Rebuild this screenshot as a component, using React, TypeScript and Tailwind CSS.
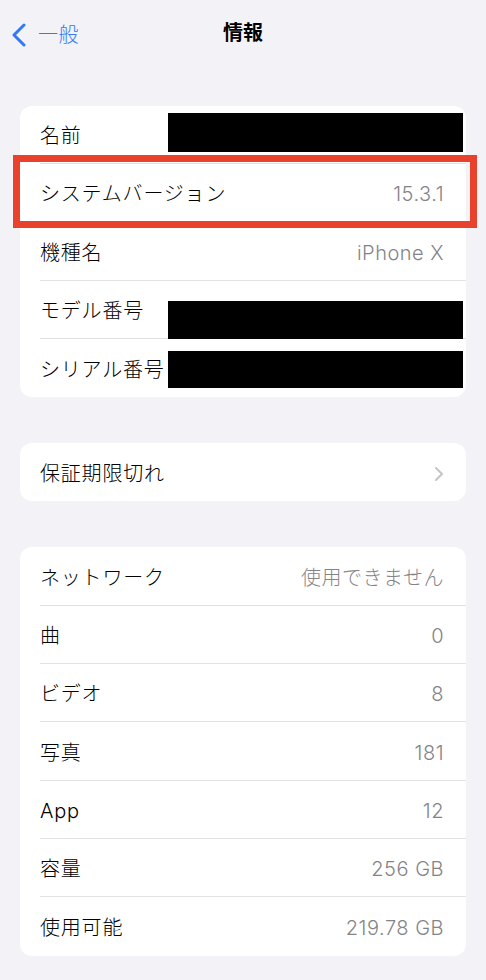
const font = { fontFamily: '"Inter", "Noto Sans CJK JP", sans-serif' };

type Box = { top: number; bottom: number };
type Row = { label: string; value?: string; box?: Box; highlight?: boolean };

const deviceRows: Row[] = [
  { label: "名前", box: { top: 7, bottom: 12 } },
  { label: "システムバージョン", value: "15.3.1", highlight: true },
  { label: "機種名", value: "iPhone X" },
  { label: "モデル番号", box: { top: 20, bottom: 0 } },
  { label: "シリアル番号", box: { top: 12, bottom: 9 } },
];

const statRows: Row[] = [
  { label: "ネットワーク", value: "使用できません" },
  { label: "曲", value: "0" },
  { label: "ビデオ", value: "8" },
  { label: "写真", value: "181" },
  { label: "App", value: "12" },
  { label: "容量", value: "256 GB" },
  { label: "使用可能", value: "219.78 GB" },
];

function InfoRow({ row, last }: { row: Row; last: boolean }) {
  return (
    <div className="relative h-[58.3px] pl-5">
      <div
        className={`flex h-full items-center justify-between pr-[22px] pt-[3px] ${
          last ? "" : "border-b border-[#e2e2e5]"
        }`}
      >
        <span className="text-[20px] font-light tracking-[0.8px] text-black whitespace-nowrap">{row.label}</span>
        {row.value && (
          <span className="text-[20px] font-light tracking-[0.5px] text-[#848488]">{row.value}</span>
        )}
      </div>
      {row.box && (
        <div
          className="absolute left-[148px] right-[3px] bg-black"
          style={{ top: row.box.top, bottom: row.box.bottom }}
        />
      )}
      {row.highlight && (
        <div className="absolute -left-[7px] -right-[11px] -top-[9px] -bottom-[5px] border-[7px] border-[#e8412c]" />
      )}
    </div>
  );
}

function Card({ rows }: { rows: Row[] }) {
  return (
    <div className="mx-5 rounded-[12px] bg-white">
      {rows.map((r, i) => (
        <InfoRow key={r.label} row={r} last={i === rows.length - 1} />
      ))}
    </div>
  );
}

export default function App() {
  return (
    <div className="min-h-[980px] w-[486px] bg-[#f2f2f7]" style={font}>
      {/* Nav bar */}
      <div className="relative flex h-[66px] items-center justify-center">
        <div className="absolute left-[10px] top-[20px] flex items-center gap-[10px]">
          <svg width="18" height="24" viewBox="0 0 18 24" fill="none" aria-hidden="true">
            <path d="M14 2L4 12L14 22" stroke="#3478f6" strokeWidth="3" strokeLinecap="round" strokeLinejoin="round" />
          </svg>
          <span className="text-[20px] font-light tracking-[0.5px] text-[#3478f6]">一般</span>
        </div>
        <span className="text-[20px] font-bold text-black">情報</span>
      </div>

      <div className="pt-[40px]">
        <Card rows={deviceRows} />
      </div>

      <div className="mx-5 mt-[46px] flex h-[58px] items-center justify-between rounded-[12px] bg-white pl-5 pr-[22px] pt-[3px]">
        <span className="text-[20px] font-light tracking-[0.8px] text-black">保証期限切れ</span>
        <svg width="10" height="16" viewBox="0 0 10 16" fill="none" aria-hidden="true">
          <path d="M2 2L8 8L2 14" stroke="#c4c4c7" strokeWidth="2" strokeLinecap="round" strokeLinejoin="round" />
        </svg>
      </div>

      <div className="mt-[46px] pb-6">
        <Card rows={statRows} />
      </div>
    </div>
  );
}
